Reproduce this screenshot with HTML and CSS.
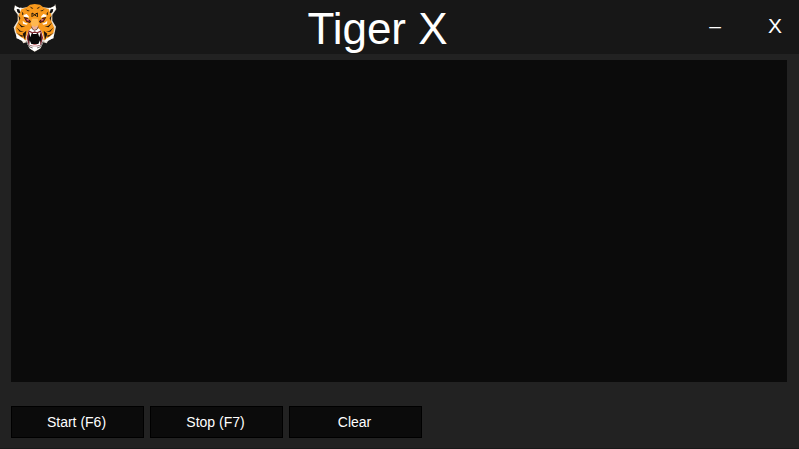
FILE: index.html
```html
<!DOCTYPE html>
<html lang="en">
<head>
<meta charset="utf-8">
<title>Tiger X</title>
<link rel="stylesheet" href="styles.css">
</head>
<body>
<div class="window">
  <header class="titlebar">
    <svg class="logo" viewBox="39 9 132 147" role="img" aria-label="Tiger">
      <!-- pale mane -->
      <path fill="#e9dfd0" d="M45 14L66 24 80 22 130 22 148 24 166 13 169 28 157 44 157 62 168 80 164 98 158 104 161 115 146 120 140 130 130 127 122 145 104 155 88 145 80 127 70 130 64 120 49 115 52 104 45 98 41 82 53 62 53 44 42 29Z"/>
      <!-- orange fur -->
      <path fill="#f9991c" d="M62 29L80 22 90 14 104 12 120 14 130 22 150 29 154 46 154 64 163 84 160 99 152 108 138 119 130 120 126 98 112 84 97 84 84 98 80 120 72 119 58 108 49 98 46 84 56 64 56 46Z"/>
      <path fill="#ffb850" d="M96 56H113L117 72 110 80H99L92 72Z"/>
      <!-- ears -->
      <path fill="#fff" d="M46 15L64 24 60 38 52 39 44 27ZM164 15L146 24 150 38 158 39 167 27Z"/>
      <path fill="#14110e" d="M50 27L58 28 61 38 57 40 52 36ZM160 27L152 28 149 38 153 40 158 36ZM44 13L64 20 60 24 47 18ZM166 13L146 20 150 24 163 18Z"/>
      <!-- brows and cheeks -->
      <path fill="#fff" d="M71 45L80 42 86 49 87 53 80 51 71 50ZM139 45L130 42 124 49 123 53 130 51 139 50ZM68 62L75 68 84 71 79 74 69 71ZM142 62L135 68 126 71 131 74 141 71ZM96 83L104 90 113 83 124 92 131 112 126 134 118 146 104 154 91 146 83 134 78 112 86 92Z"/>
      <path fill="#fff" d="M46 98L58 109 73 117 76 126 62 121 50 113ZM164 98L152 109 137 117 134 126 148 121 160 113Z"/>
      <!-- tapered stripes -->
      <path fill="#1c130b" d="M88 19L100 25 96 26ZM122 19L110 25 114 26ZM76 28L90 33 84 34ZM134 28L120 33 126 34ZM65 34L71 42 66 46 67 41ZM145 34L139 42 144 46 143 41ZM55 46L61 54 59 63ZM155 46L149 54 151 63ZM53 67L66 78 76 80 64 82ZM157 67L144 78 134 80 146 82ZM49 82L61 92 72 95 59 95ZM161 82L149 92 138 95 151 95ZM49 98L62 105 72 108 65 110ZM161 98L148 105 138 108 145 110ZM68 101L79 92 75 120ZM142 101L131 92 135 120Z"/>
      <path fill="none" stroke="#1c130b" stroke-width="3" stroke-linejoin="round" d="M96 51V39L104 44 112 39V51M99 49L104 44 109 49"/>
      <!-- eyes -->
      <path fill="#25130f" d="M71 51L82 54 93 64 90 69 79 65ZM139 51L128 54 117 64 120 69 131 65Z"/>
      <path fill="#b43537" d="M75 55L84 57 90 65 81 64ZM135 55L126 57 120 65 129 64Z"/>
      <path fill="#f4d0bd" d="M82 58h4v3h-4zM124 58h4v3h-4z"/>
      <!-- nose -->
      <path fill="#efb29a" d="M95 76L104 80 114 76 113 86 104 91 96 86Z"/>
      <path fill="none" stroke="#2a1712" stroke-width="2" d="M94 80L98 88 104 91 111 88 115 80"/>
      <!-- open jaws -->
      <path fill="#7b232b" d="M86 91L98 97 104 94 111 97 123 91 129 113 123 135 114 139H95L86 135 80 113Z"/>
      <path fill="#080808" d="M88 99L104 102 121 99 124 119 118 132 104 135 91 132 85 119Z"/>
      <path fill="#fff" d="M87 96L95 99 91 112ZM122 96L114 99 118 112ZM99 99h11v3H99zM89 121L94 132H115L120 121 121 135 104 139 88 135Z"/>
      <path fill="#ba6266" d="M97 134Q104 130 112 134L109 136H99Z"/>
      <path fill="none" stroke="#302a28" stroke-width="2" d="M80 124L87 140 98 144M129 124L122 140 111 144"/>
    </svg>
    <h1 class="title">Tiger X</h1>
    <div class="controls">
      <button class="control" type="button" aria-label="Minimize">–</button>
      <button class="control" type="button" aria-label="Close">X</button>
    </div>
  </header>
  <main class="content">
    <textarea class="output" aria-label="Output" spellcheck="false"></textarea>
    <div class="actions">
      <button class="action" type="button">Start (F6)</button>
      <button class="action" type="button">Stop (F7)</button>
      <button class="action" type="button">Clear</button>
    </div>
  </main>
</div>
</body>
</html>
```

FILE: styles.css
```css
* {
  box-sizing: border-box;
}

body {
  margin: 0;
  background: #222;
  color: #fff;
  font-family: "Liberation Sans", Arial, sans-serif;
}

.window {
  display: flex;
  flex-direction: column;
  min-height: 100vh;
  border-bottom: 1px solid #1a1a1a;
}

.titlebar {
  display: grid;
  grid-template-columns: 57px 1fr auto;
  gap: 13px;
  height: 54px;
  padding-right: 3px;
  background: #171717;
}

.logo {
  width: 44px;
  height: 49px;
  margin: 3px 0 0 13px;
}

.title {
  margin: 0;
  padding-left: 4px;
  font-size: 44px;
  font-weight: 400;
  line-height: 57px;
  text-align: center;
}

.controls {
  display: flex;
  gap: 18px;
}

.control {
  width: 42px;
  height: 52px;
  padding: 0;
  border: 0;
  background: transparent;
  color: inherit;
  font: inherit;
  font-size: 21px;
}

.content {
  display: flex;
  flex: 1;
  flex-direction: column;
  gap: 24px;
  padding: 6px 12px 10px 11px;
}

.output {
  display: block;
  flex: 1;
  width: 100%;
  padding: 8px;
  border: 0;
  outline: 0;
  resize: none;
  background: #0b0b0b;
  color: inherit;
  font: inherit;
  font-size: 14px;
}

.actions {
  display: flex;
  gap: 6px;
}

.action {
  width: 133px;
  height: 32px;
  padding: 0 2px 0 0;
  border: 1px solid #000;
  background: #0b0b0b;
  color: inherit;
  font: inherit;
  font-size: 14px;
}
```
